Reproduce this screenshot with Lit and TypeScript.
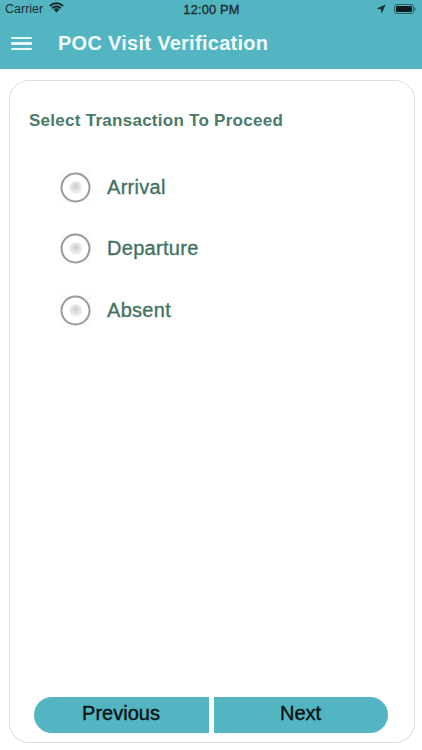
import { LitElement, html, css } from "lit";
import { customElement } from "lit/decorators.js";

@customElement("app-root")
export class AppRoot extends LitElement {
  static styles = css`
    :host { display: block; width: 422px; height: 750px; background: #fff; font-family: "Liberation Sans", Arial, sans-serif; overflow: hidden; }
    .page { height: 750px; display: flex; flex-direction: column; }
    .top { height: 69px; background: #52b5c1; flex: none; display: flex; flex-direction: column; }
    .status { height: 18px; display: grid; grid-template-columns: 1fr auto 1fr; align-items: center; padding: 0 6px 0 5px; color: #1d2d30; font-size: 12.5px; box-sizing: border-box; }
    .status-left { display: flex; align-items: center; gap: 6px; }
    .wifi { margin-bottom: 4px; }
    .time { font-size: 12.8px; letter-spacing: 0.2px; -webkit-text-stroke: 0.35px #1d2d30; margin-left: 2px; }
    .status-right { display: flex; align-items: center; justify-content: flex-end; gap: 8px; }
    .battery { width: 22px; height: 10px; display: block; }
    .bar { flex: 1; display: flex; align-items: center; padding: 0 0 0 11px; }
    .menu { width: 21px; height: 14px; display: flex; flex-direction: column; justify-content: space-between; margin-right: 26px; }
    .menu span { display: block; height: 2.4px; background: #e9f7f8; border-radius: 1px; }
    .title { color: #f2fbfc; font-size: 20px; font-weight: 700; letter-spacing: 0.28px; white-space: nowrap; }
    .card { flex: none; box-sizing: border-box; width: 406px; height: 663px; margin: 11px 0 0 9px; border: 1.5px solid #dcdcdc; border-radius: 20px; padding: 30px 24px 9px 19px; display: flex; flex-direction: column; }
    .heading { color: #4a7a68; font-size: 17px; font-weight: 700; letter-spacing: 0.27px; line-height: 20px; white-space: nowrap; }
    .options { display: flex; flex-direction: column; gap: 30.6px; padding: 40.5px 0 0 31px; }
    .opt { display: flex; align-items: center; gap: 16px; height: 31px; }
    .radio { width: 31px; height: 31px; flex: none; display: block; }
    .lbl { color: #437263; font-size: 20px; letter-spacing: 0.3px; -webkit-text-stroke: 0.35px #437263; }
    .actions { margin-top: auto; display: flex; gap: 5px; padding-left: 4.5px; }
    .btn { width: 175px; height: 36px; border: 0; padding: 0 0 4px; background: #52b5c1; color: #071114; font: 20px "Liberation Sans", Arial, sans-serif; -webkit-text-stroke: 0.4px #071114; }
    .prev { border-radius: 18px 0 0 18px; }
    .next { width: 174px; border-radius: 0 18px 18px 0; }
  `;

  private radio() {
    return html`<svg class="radio" viewBox="0 0 31 31" aria-hidden="true">
      <defs><radialGradient id="g" cx="50%" cy="42%" r="60%"><stop offset="0%" stop-color="#cbcbcb"/><stop offset="50%" stop-color="#e2e2e2"/><stop offset="100%" stop-color="#f6f6f6"/></radialGradient></defs>
      <rect width="31" height="31" fill="#fbfbfb"/>
      <circle cx="15.5" cy="15.5" r="14" fill="#fff" stroke="#9a9a9a" stroke-width="2"/>
      <circle cx="15.8" cy="15.5" r="6.5" fill="url(#g)"/>
    </svg>`;
  }

  render() {
    return html`<div class="page">
      <header class="top">
        <div class="status">
          <div class="status-left">
            <span>Carrier</span>
            <svg class="wifi" width="15" height="11" viewBox="0 0 15 11" aria-hidden="true"><path d="M7.5 10.6 4.7 7.6a4 4 0 0 1 5.6 0Z" fill="#14242a"/><path d="M1 3.9a9.5 9.5 0 0 1 13 0M3.2 6.2a6.3 6.3 0 0 1 8.6 0" fill="none" stroke="#14242a" stroke-width="2"/></svg>
          </div>
          <span class="time">12:00 PM</span>
          <div class="status-right">
            <svg width="10" height="10" viewBox="0 0 10 10" aria-hidden="true"><path d="M9.6.4 .6 4.4l4.2.8.9 4.2Z" fill="#1d2d30"/></svg>
            <svg class="battery" viewBox="0 0 22 10" aria-hidden="true"><rect x=".5" y=".5" width="19" height="9" rx="2.5" fill="none" stroke="#2f5c63"/><rect x="2" y="2" width="16" height="6" rx="1.2" fill="#0e1a1d"/><rect x="20.3" y="3.5" width="1.2" height="3" rx=".6" fill="#2f5c63"/></svg>
          </div>
        </div>
        <div class="bar">
          <div class="menu"><span></span><span></span><span></span></div>
          <div class="title">POC Visit Verification</div>
        </div>
      </header>
      <section class="card">
        <div class="heading">Select Transaction To Proceed</div>
        <div class="options">
          ${["Arrival", "Departure", "Absent"].map(
            (t) => html`<div class="opt">${this.radio()}<span class="lbl">${t}</span></div>`
          )}
        </div>
        <div class="actions">
          <button class="btn prev">Previous</button>
          <button class="btn next">Next</button>
        </div>
      </section>
    </div>`;
  }
}
